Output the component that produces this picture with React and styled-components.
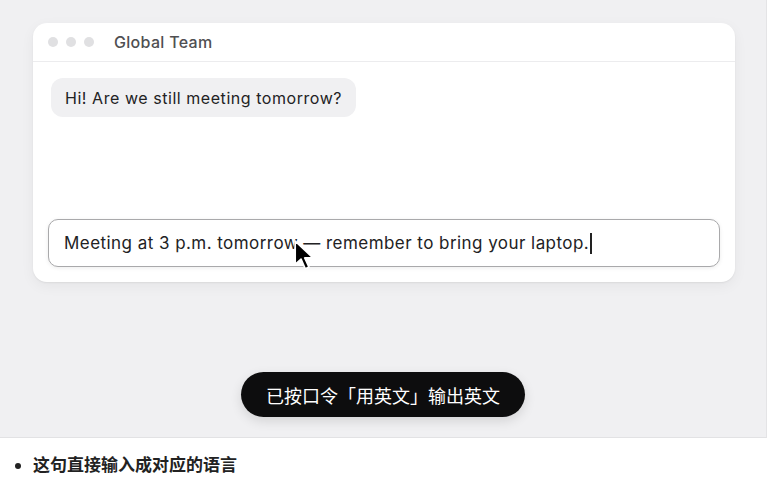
import React from "react";
import styled, { createGlobalStyle } from "styled-components";

const Global = createGlobalStyle`
  html, body { margin: 0; padding: 0; background: #ffffff; }
  body { font-family: Inter, "Noto Sans CJK SC", sans-serif; -webkit-font-smoothing: antialiased; }
`;

const Stage = styled.div`
  box-sizing: border-box;
  width: 767px;
  height: 438px;
  background: #f0f0f2;
  border-right: 1px solid #e4e4e6;
  border-bottom: 1px solid #e2e2e4;
  padding: 23px 0 0 33px;
  display: flex;
  flex-direction: column;
  align-items: flex-start;
`;

const Window = styled.div`
  box-sizing: border-box;
  width: 702px;
  height: 259px;
  background: #ffffff;
  border-radius: 14px;
  box-shadow: 0 1px 2px rgba(0,0,0,0.06), 0 4px 14px rgba(0,0,0,0.05);
  display: flex;
  flex-direction: column;
  position: relative;
`;

const TitleBar = styled.div`
  height: 39px;
  box-sizing: border-box;
  border-bottom: 1px solid #ececee;
  display: flex;
  align-items: center;
  padding-left: 15px;
`;

const Dots = styled.div`
  display: flex;
  gap: 8px;
  margin-right: 20px;
`;

const Dot = styled.span`
  width: 10px;
  height: 10px;
  border-radius: 50%;
  background: #e0e0e2;
`;

const Title = styled.div`
  font-size: 16px;
  font-weight: 500;
  color: #4f4f52;
  letter-spacing: 0.3px;
`;

const Body = styled.div`
  flex: 1;
  display: flex;
  flex-direction: column;
  justify-content: space-between;
  align-items: flex-start;
  padding: 16px 15px 15px 15px;
`;

const Bubble = styled.div`
  margin-left: 3px;
  height: 39px;
  box-sizing: border-box;
  padding: 0 14px;
  display: flex;
  align-items: center;
  background: #f0f0f2;
  border-radius: 12px;
  font-size: 16px;
  letter-spacing: 0.55px;
  color: #222224;
`;

const Input = styled.div`
  position: relative;
  box-sizing: border-box;
  width: 672px;
  height: 48px;
  border: 1.5px solid #a9a9ab;
  border-radius: 10px;
  background: #fff;
  box-shadow: 0 1px 4px rgba(0,0,0,0.08);
  display: flex;
  align-items: center;
  padding-left: 15px;
  font-size: 17px;
  letter-spacing: 0.45px;
  color: #222224;
`;

const Caret = styled.span`
  display: inline-block;
  width: 1.5px;
  height: 21px;
  background: #222;
  margin-left: 1px;
`;

const Pointer = styled.svg`
  position: absolute;
  left: 244px;
  top: 19px;
  width: 23.5px;
  height: 34px;
`;

const ToastRow = styled.div`
  align-self: stretch;
  margin-left: -33px;
  margin-top: 90px;
  display: flex;
  justify-content: center;
`;

const Toast = styled.div`
  height: 45px;
  box-sizing: border-box;
  padding: 0 25px;
  border-radius: 23px;
  background: #0d0d0e;
  color: #ffffff;
  font-size: 18px;
  font-family: "Noto Sans CJK SC", sans-serif;
  font-weight: 400;
  display: flex;
  align-items: center;
  box-shadow: 0 4px 12px rgba(0,0,0,0.12);
`;

const Notes = styled.ul`
  margin: 0;
  padding: 13px 0 0 33px;
  font-family: "Noto Sans CJK SC", sans-serif;
  font-size: 17px;
  font-weight: 700;
  color: #222;
  li { line-height: 26px; }
  li::marker { font-size: 15px; }
`;

export default function App() {
  return (
    <>
      <Global />
      <Stage>
        <Window>
          <TitleBar>
            <Dots>
              <Dot />
              <Dot />
              <Dot />
            </Dots>
            <Title>Global Team</Title>
          </TitleBar>
          <Body>
            <Bubble>Hi! Are we still meeting tomorrow?</Bubble>
            <Input>
              Meeting at 3 p.m. tomorrow — remember to bring your laptop.
              <Caret />
              <Pointer viewBox="0 0 22 32">
                <path
                  d="M2 2 L2 24 L7.5 19 L11.5 28 L15 26.5 L11 17.8 L18.5 17.5 Z"
                  fill="#000"
                  stroke="#fff"
                  strokeWidth="1.6"
                  strokeLinejoin="round"
                />
              </Pointer>
            </Input>
          </Body>
        </Window>
        <ToastRow>
          <Toast>已按口令「用英文」输出英文</Toast>
        </ToastRow>
      </Stage>
      <Notes>
        <li>这句直接输入成对应的语言</li>
      </Notes>
    </>
  );
}
